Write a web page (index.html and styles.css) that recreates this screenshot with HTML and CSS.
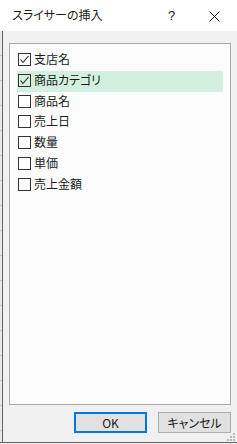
FILE: index.html
```html
<!DOCTYPE html>
<html lang="ja">
<head>
<meta charset="utf-8">
<link rel="stylesheet" href="styles.css">
</head>
<body>
<div class="window">
  <div class="titlebar">
    <span class="title">スライサーの挿入</span>
    <span class="help">?</span>
    <svg class="close" width="11" height="11" viewBox="0 0 11 11"><path d="M0.5 0.5 L10.5 10.5 M10.5 0.5 L0.5 10.5" stroke="#111" stroke-width="1" fill="none"/></svg>
  </div>
  <div class="lower">
    <div class="strip"></div>
    <div class="dialog">
      <div class="listbox">
        <div class="row"><span class="cb checked"><svg width="11" height="11" viewBox="0 0 11 11"><path d="M1.5 5.5 L4 8.5 L9.5 2" stroke="#222" stroke-width="1.1" fill="none"/></svg></span><span class="label">支店名</span></div>
        <div class="row selected"><span class="cb checked"><svg width="11" height="11" viewBox="0 0 11 11"><path d="M1.5 5.5 L4 8.5 L9.5 2" stroke="#222" stroke-width="1.1" fill="none"/></svg></span><span class="label">商品カテゴリ</span></div>
        <div class="row"><span class="cb"></span><span class="label">商品名</span></div>
        <div class="row"><span class="cb"></span><span class="label">売上日</span></div>
        <div class="row"><span class="cb"></span><span class="label">数量</span></div>
        <div class="row"><span class="cb"></span><span class="label">単価</span></div>
        <div class="row"><span class="cb"></span><span class="label">売上金額</span></div>
      </div>
      <div class="buttons">
        <button class="btn default">OK</button>
        <button class="btn">キャンセル</button>
      </div>
      <svg class="grip" width="8" height="8" viewBox="0 0 8 8" fill="#b8b8b8"><rect x="6" y="0" width="2" height="2"/><rect x="3" y="3" width="2" height="2"/><rect x="6" y="3" width="2" height="2"/><rect x="0" y="6" width="2" height="2"/><rect x="3" y="6" width="2" height="2"/><rect x="6" y="6" width="2" height="2"/></svg>
    </div>
  </div>
  <div class="bottomline"></div>
</div>
</body>
</html>
```
FILE: styles.css
```css
html, body {
  margin: 0;
  padding: 0;
}
body {
  width: 237px;
  height: 444px;
  overflow: hidden;
  background: #f0f0f0;
  font-family: "Noto Sans CJK JP", "Noto Sans", sans-serif;
  font-feature-settings: "palt";
  color: #1a1a1a;
}
.window {
  width: 237px;
  height: 444px;
  display: flex;
  flex-direction: column;
}
.titlebar {
  height: 31px;
  background: #ffffff;
  display: flex;
  align-items: center;
  position: relative;
  flex: none;
}
.title {
  margin-left: 12px;
  font-size: 12px;
  line-height: 12px;
  margin-top: -1px;
}
.help {
  position: absolute;
  left: 168px;
  top: 9px;
  font-family: "Liberation Sans", sans-serif;
  font-size: 13px;
  line-height: 13px;
}
.close {
  position: absolute;
  left: 209px;
  top: 11px;
}
.lower {
  flex: 1;
  display: flex;
}
.strip {
  width: 2px;
  background: #e8e8e8;
  border-right: 1px solid #646464;
  background-image: repeating-linear-gradient(to bottom, transparent 0, transparent 24px, #c8c8c8 24px, #c8c8c8 25px);
}
.dialog {
  flex: 1;
  background: #f0f0f0;
  display: flex;
  flex-direction: column;
  position: relative;
}
.listbox {
  box-sizing: border-box;
  margin: 12px 6px 0 6px;
  height: 362px;
  border: 1px solid #a9a9a9;
  background: #fcfcfc;
  padding: 6px 7px 0 7px;
  display: flex;
  flex-direction: column;
}
.row {
  height: 20.83px;
  flex: none;
  display: flex;
  align-items: flex-start;
  padding-left: 1px;
}
.row.selected {
  background: #d3efdf;
}
.cb {
  width: 11px;
  height: 11px;
  margin-top: 3px;
  border: 1px solid #333333;
  background: #ffffff;
  flex: none;
  display: flex;
}
.selected .cb {
  background: transparent;
}
.label {
  margin-left: 3px;
  font-size: 12px;
  line-height: 14px;
  margin-top: 2px;
}
.buttons {
  display: flex;
  justify-content: flex-end;
  gap: 11px;
  margin: 7px 6px 0 0;
}
.btn {
  width: 73px;
  height: 21px;
  box-sizing: border-box;
  background: #e1e1e1;
  border: 1px solid #adadad;
  font-family: "Noto Sans CJK JP", "Noto Sans", sans-serif;
  font-feature-settings: "palt";
  font-size: 12px;
  color: #1a1a1a;
  padding: 0;
  line-height: 17px;
}
.btn.default {
  border: 2px solid #0078d7;
}
.grip {
  position: absolute;
  right: 2px;
  bottom: 1px;
}
.bottomline {
  height: 1px;
  background: #646464;
  flex: none;
  margin-bottom: 1px;
}
```
